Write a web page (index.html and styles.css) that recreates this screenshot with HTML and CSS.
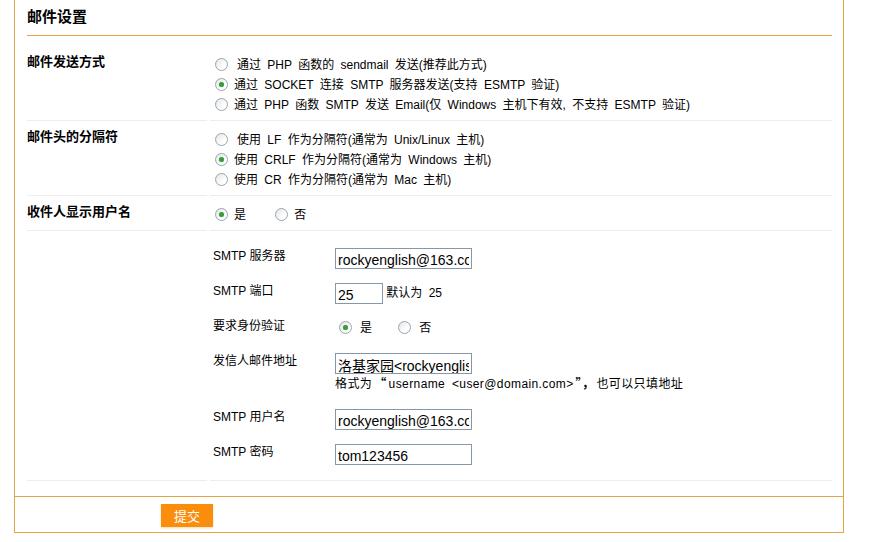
FILE: index.html
```html
<!DOCTYPE html>
<html>
<head>
<meta charset="utf-8">
<title>邮件设置</title>
<link rel="stylesheet" href="styles.css">
</head>
<body>
  <div class="panel">
    <div class="panel-body">
      <h3 class="panel-title">邮件设置</h3>

      <div class="form-table">
        <div class="label-cell first">邮件发送方式</div>
        <div class="value-cell first">
          <label class="line"><input type="radio" name="mailsend"><span class="pad">通过 PHP 函数的 sendmail 发送(推荐此方式)</span></label>
          <label class="line"><input type="radio" name="mailsend" checked>通过 SOCKET 连接 SMTP 服务器发送(支持 ESMTP 验证)</label>
          <label class="line"><input type="radio" name="mailsend">通过 PHP 函数 SMTP 发送 Email(仅 Windows 主机下有效, 不支持 ESMTP 验证)</label>
        </div>

        <div class="label-cell">邮件头的分隔符</div>
        <div class="value-cell">
          <label class="line"><input type="radio" name="maildelimiter"><span class="pad">使用 LF 作为分隔符(通常为 Unix/Linux 主机)</span></label>
          <label class="line"><input type="radio" name="maildelimiter" checked>使用 CRLF 作为分隔符(通常为 Windows 主机)</label>
          <label class="line"><input type="radio" name="maildelimiter">使用 CR 作为分隔符(通常为 Mac 主机)</label>
        </div>

        <div class="label-cell">收件人显示用户名</div>
        <div class="value-cell">
          <label class="line inline"><input type="radio" name="mailusername" checked>是</label>
          <label class="line inline second"><input type="radio" name="mailusername">否</label>
        </div>

        <div class="label-cell"></div>
        <div class="value-cell smtp">
          <div class="smtp-grid">
            <div class="smtp-label">SMTP 服务器</div>
            <div><input class="text" type="text" value="rockyenglish@163.com"></div>

            <div class="smtp-label">SMTP 端口</div>
            <div><input class="text short" type="text" value="25"> <span class="note">默认为 25</span></div>

            <div class="smtp-label">要求身份验证</div>
            <div class="smtp-radios">
              <label><input type="radio" name="auth" checked>是</label>
              <label class="second"><input type="radio" name="auth">否</label>
            </div>

            <div class="smtp-label">发信人邮件地址</div>
            <div>
              <input class="text" type="text" value="洛基家园&lt;rockyenglish@163.com&gt;">
              <div class="hint">格式为<span class="cjk">“</span>username &lt;user@domain.com&gt;<span class="cjk">”，</span>也可以只填地址</div>
            </div>

            <div class="smtp-label">SMTP 用户名</div>
            <div><input class="text" type="text" value="rockyenglish@163.com"></div>

            <div class="smtp-label">SMTP 密码</div>
            <div><input class="text" type="text" value="tom123456"></div>
          </div>
        </div>
      </div>
    </div>

    <div class="panel-footer">
      <button class="submit" type="submit">提交</button>
    </div>
  </div>
</body>
</html>
```

FILE: styles.css
```css
  body {
    margin: 0;
    background-color: #fff;
    color: #000;
    font-family: "Liberation Sans", "Noto Sans CJK SC", sans-serif;
    font-size: 12px;
  }

  .panel {
    margin-left: 14px;
    width: 828px;
    border: 1px solid #e2a444;
    border-top: none;
  }

  .panel-body {
    padding: 0 11px 15px 12px;
  }

  .panel-title {
    margin: 0;
    height: 35px;
    line-height: 33px;
    font-size: 15px;
    font-weight: bold;
    border-bottom: 1px solid #e2a444;
  }

  .form-table {
    display: grid;
    grid-template-columns: 180px 1fr;
    column-gap: 3px;
  }

  .label-cell,
  .value-cell {
    border-bottom: 1px solid #ededed;
    padding-top: 9px;
    padding-bottom: 5px;
  }

  .label-cell {
    font-size: 13px;
    font-weight: bold;
    line-height: 14px;
  }

  .first {
    padding-top: 19px;
  }

  .line {
    display: block;
    height: 20px;
    line-height: 20px;
    word-spacing: 3px;
    white-space: nowrap;
  }

  .line .pad {
    padding-left: 3px;
  }

  .line.inline {
    display: inline-block;
  }

  .line.second {
    margin-left: 21px;
  }

  input[type="radio"] {
    -webkit-appearance: none;
    appearance: none;
    box-sizing: border-box;
    width: 13px;
    height: 13px;
    margin: 0 6px 0 5px;
    vertical-align: -2px;
    border: 1px solid #9aa4ae;
    border-radius: 50%;
    background: linear-gradient(135deg, #e4e6e8, #ffffff 70%);
    position: relative;
  }

  input[type="radio"]:checked::after {
    content: "";
    position: absolute;
    left: 3px;
    top: 3px;
    width: 5px;
    height: 5px;
    border-radius: 50%;
    background: #3c9a3c;
    box-shadow: 0 0 1px #7fcf7f;
  }

  .smtp {
    padding: 17px 0 15px 3px;
  }

  .smtp-grid {
    display: grid;
    grid-template-columns: 122px 1fr;
    row-gap: 14px;
  }

  .smtp-label {
    line-height: 16px;
  }

  .text {
    box-sizing: border-box;
    width: 137px;
    height: 21px;
    margin: 0;
    padding: 2px 2px 0;
    border: 1px solid #8698a8;
    font-family: "Liberation Sans", "Noto Sans CJK SC", sans-serif;
    font-size: 14px;
    line-height: 17px;
    color: #000;
    vertical-align: top;
  }

  .text.short {
    width: 48px;
  }

  .note {
    line-height: 21px;
    word-spacing: 3px;
  }

  .smtp-radios {
    height: 21px;
    line-height: 21px;
  }

  .smtp-radios input[type="radio"] {
    margin-left: 4px;
    margin-right: 8px;
  }

  .smtp-radios .second {
    margin-left: 19px;
  }

  .hint {
    line-height: 18px;
    padding-bottom: 2px;
    word-spacing: 3px;
    letter-spacing: 0.4px;
  }

  .cjk {
    font-family: "Noto Sans CJK SC", sans-serif;
    font-weight: bold;
    margin: 0 2px;
  }

  .panel-footer {
    border-top: 1px solid #e2a444;
    padding: 7px 0 5px 146px;
  }

  .submit {
    width: 52px;
    height: 23px;
    border: none;
    background-color: #fb8d0c;
    color: #fff;
    font-family: "Liberation Sans", "Noto Sans CJK SC", sans-serif;
    font-size: 13px;
    cursor: pointer;
    box-shadow: 0 1px 2px rgba(230, 160, 60, 0.4);
  }
```
